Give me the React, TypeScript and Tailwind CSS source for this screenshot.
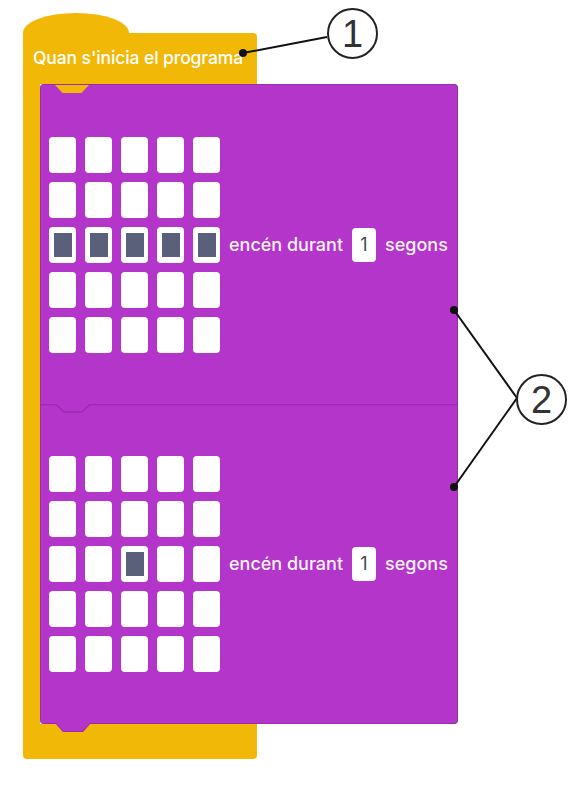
const LIT_ROW = 2;

function Cell({ on }: { on: boolean }) {
  return (
    <div className="flex h-[36px] w-[27px] items-center justify-center rounded-[4px] bg-white">
      {on && <div className="h-[24px] w-[18px] bg-[#5a6079]" />}
    </div>
  );
}

function LedBlock({ lit, first }: { lit: number[]; first?: boolean }) {
  return (
    <div
      className={
        "relative flex h-[320px] items-center gap-[9px] border border-[#9a2cae] bg-[#b335c9] pl-[8px] " +
        (first ? "rounded-t-[4px] border-b-0" : "rounded-b-[4px] border-t-0")
      }
    >
      {/* notch at the top of each block */}
      {first ? (
        <div className="absolute left-[14px] top-0 h-[8px] w-[34px] bg-[#f2b807] [clip-path:polygon(0_0,100%_0,78%_100%,22%_100%)]" />
      ) : (
        <svg className="absolute -left-px top-0" width="417" height="10">
          <path d="M0 0.5 H16 L24 8 H42 L50 0.5 H417" fill="none" stroke="#9a2cae" strokeWidth="1.5" />
        </svg>
      )}
      {!first && (
        <div className="absolute -bottom-[9px] left-[14px] h-[9px] w-[36px] bg-[#9a2cae] [clip-path:polygon(0_0,100%_0,78%_100%,22%_100%)]">
          <div className="mx-auto h-[8px] w-[34px] bg-[#b335c9] [clip-path:polygon(0_0,100%_0,78%_100%,22%_100%)]" />
        </div>
      )}

      <div className="grid grid-cols-5 gap-[9px]">
        {Array.from({ length: 25 }).map((_, i) => (
          <Cell key={i} on={Math.floor(i / 5) === LIT_ROW && lit.includes(i % 5)} />
        ))}
      </div>

      <div className="flex items-center gap-[9px] text-[18px] font-medium text-[#fbf3fb]">
        <span>encén durant</span>
        <span className="flex h-[34px] w-[24px] items-center justify-center rounded-[4px] bg-white text-[18px] font-normal text-[#454a47]">
          1
        </span>
        <span>segons</span>
      </div>
    </div>
  );
}

export default function App() {
  return (
    <div className="relative h-[789px] w-[576px] overflow-hidden bg-white font-['Inter',sans-serif]">
      <div className="flex flex-col pl-[23px] pt-[13px]">
        {/* ===== hat block ===== */}
        <div className="h-[20px] w-[106px] bg-[#f2b807] [border-top-left-radius:50%_100%] [border-top-right-radius:50%_100%]" />
        <div className="flex h-[51px] w-[234px] items-center rounded-tr-[4px] bg-[#f2b807] pl-[10px] text-[17.5px] font-medium tracking-[-0.1px] text-white">
          Quan s'inicia el programa
        </div>

        {/* ===== body ===== */}
        <div className="flex">
          <div className="w-[17px] bg-[#f2b807]" />
          <div className="flex w-[418px] flex-col">
            <LedBlock lit={[0, 1, 2, 3, 4]} first />
            <LedBlock lit={[2]} />
          </div>
        </div>

        {/* ===== footer ===== */}
        <div className="h-[35px] w-[234px] rounded-b-[4px] bg-[#f2b807]" />
      </div>

      {/* ===== callouts ===== */}
      <svg className="pointer-events-none absolute left-0 top-0" width="576" height="789">
        <line x1="243" y1="53" x2="327" y2="37" stroke="#111" strokeWidth="2" />
        <circle cx="243" cy="53" r="4" fill="#111" />
        <line x1="454" y1="310" x2="517" y2="398" stroke="#111" strokeWidth="2" />
        <line x1="454" y1="487" x2="517" y2="398" stroke="#111" strokeWidth="2" />
        <circle cx="454" cy="310" r="4" fill="#111" />
        <circle cx="454" cy="487" r="4" fill="#111" />
      </svg>
      <div className="absolute left-[327px] top-[8px] flex h-[51px] w-[51px] items-center justify-center rounded-full border-2 border-[#222] bg-white font-['Liberation_Sans',sans-serif] text-[38px] leading-none text-[#333]">
        1
      </div>
      <div className="absolute left-[516px] top-[374px] flex h-[51px] w-[51px] items-center justify-center rounded-full border-2 border-[#222] bg-white font-['Liberation_Sans',sans-serif] text-[38px] leading-none text-[#333]">
        2
      </div>
    </div>
  );
}
